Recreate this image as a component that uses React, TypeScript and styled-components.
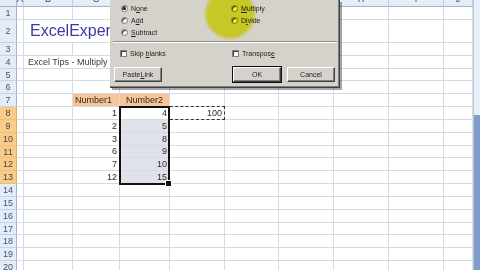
import styled, { createGlobalStyle } from "styled-components";

const GlobalStyle = createGlobalStyle`
  html, body {
    margin: 0;
    padding: 0;
    background: #ffffff;
  }
  body {
    overflow: hidden;
    font-family: "Liberation Sans", Arial, sans-serif;
  }
`;

const COLS = ["A", "B", "C", "D", "E", "F", "G", "H", "I", "J"];
const WIDTHS = [7, 49, 47, 50, 55, 54, 55, 55, 55, 29];
const ROW_COUNT = 21;
const ORANGE_ROWS = [8, 9, 10, 11, 12, 13];

type Kind = "title" | "note" | "head" | "num";
type CellValue = { text: string; kind: Kind; align?: "left" | "right" | "center"; span?: number };

const values: Record<string, CellValue> = {
  B2: { text: "ExcelExpert", kind: "title", span: 3 },
  B4: { text: "Excel Tips - Multiply by a Constant", kind: "note", span: 3 },
  C7: { text: "Number1", kind: "head", align: "left" },
  D7: { text: "Number2", kind: "head", align: "center" },
  E8: { text: "100", kind: "num", align: "right" },
};
const number1 = [1, 2, 3, 6, 7, 12];
const number2 = [4, 5, 8, 9, 10, 15];
number1.forEach((n, i) => {
  values[`C${8 + i}`] = { text: String(n), kind: "num", align: "right" };
});
number2.forEach((n, i) => {
  values[`D${8 + i}`] = { text: String(n), kind: "num", align: "right" };
});

const Screen = styled.div`
  width: 480px;
  height: 270px;
  overflow: hidden;
  position: relative;
  display: flex;
  background: #ffffff;
`;

const Sheet = styled.div`
  width: 473px;
  display: grid;
  grid-template-columns: 17px ${WIDTHS.map((w) => `${w}px`).join(" ")};
  grid-template-rows: 16px 13px 23px repeat(${ROW_COUNT - 2}, 12.83px);
  margin-top: -9px;
  align-self: flex-start;
`;

const Corner = styled.div`
  grid-row: 1;
  grid-column: 1;
  background: #e4ecf7;
  border-right: 1px solid #9eb6ce;
  border-bottom: 1px solid #9eb6ce;
  box-sizing: border-box;
`;

const ColHead = styled.div<{ $col: number }>`
  grid-row: 1;
  grid-column: ${(p) => p.$col};
  box-sizing: border-box;
  background: linear-gradient(#f5f8fc, #e2eaf6);
  border-right: 1px solid #c0cee0;
  border-bottom: 1px solid #9eb6ce;
  color: #27415f;
  font-size: 9px;
  display: flex;
  align-items: center;
  justify-content: center;
`;

const RowHead = styled.div<{ $row: number; $hot: boolean }>`
  grid-row: ${(p) => p.$row};
  grid-column: 1;
  box-sizing: border-box;
  background: ${(p) => (p.$hot ? "#f8cd8c" : "#e4ecf7")};
  border-right: 1px solid ${(p) => (p.$hot ? "#eaa95a" : "#9eb6ce")};
  border-bottom: 1px solid ${(p) => (p.$hot ? "#f0bf7a" : "#c5d3e6")};
  color: ${(p) => (p.$hot ? "#4a4636" : "#3f5476")};
  font-size: 9px;
  display: flex;
  align-items: center;
  justify-content: center;
`;

const Cell = styled.div<{
  $row: number;
  $col: number;
  $span: number;
  $fill?: string;
  $align: "left" | "right" | "center";
  $kind?: Kind;
}>`
  grid-row: ${(p) => p.$row};
  grid-column: ${(p) => `${p.$col} / span ${p.$span}`};
  box-sizing: border-box;
  border-right: 1px solid #d6dbe3;
  border-bottom: 1px solid #d6dbe3;
  background: ${(p) => p.$fill ?? "transparent"};
  display: flex;
  align-items: flex-end;
  justify-content: ${(p) =>
    p.$align === "right" ? "flex-end" : p.$align === "center" ? "center" : "flex-start"};
  padding: 0 2px 1px 2px;
  white-space: nowrap;
  overflow: visible;
  font-size: ${(p) => (p.$kind === "title" ? "16px" : "9px")};
  line-height: 1;
  color: ${(p) => (p.$kind === "title" ? "#3b3c9c" : p.$kind === "note" ? "#3b3b3b" : "#2a2a2a")};
  padding-left: ${(p) => (p.$kind === "title" ? "6px" : p.$kind === "note" ? "4px" : "2px")};
  padding-bottom: ${(p) => (p.$kind === "title" ? "3px" : "1px")};
`;

const Selection = styled.div`
  grid-row: 9 / 15;
  grid-column: 5;
  position: relative;
  margin: -1px 0 -1px -1px;
  border: 2px solid #111;
  pointer-events: none;
`;

const FillHandle = styled.span`
  position: absolute;
  right: -4px;
  bottom: -4px;
  width: 5px;
  height: 5px;
  background: #111;
  border: 1px solid #fff;
`;

const Marquee = styled.div`
  grid-row: 9;
  grid-column: 6;
  margin: -1px 0 0 0;
  border: 1px dashed #333;
  border-left: none;
  pointer-events: none;
`;

const ScrollBar = styled.div`
  width: 7px;
  display: flex;
  flex-direction: column;
  border-left: 1px solid #b9c9e0;
  box-sizing: border-box;
`;

const ScrollTrack = styled.div`
  height: 115px;
  background: #e9eff8;
`;

const ScrollThumb = styled.div`
  flex: 1;
  background: #7f9bc9;
`;

/* Paste Special dialog, only its lower part is on screen */
const Dialog = styled.div`
  position: absolute;
  left: 110px;
  top: 0;
  width: 230px;
  height: 88px;
  box-sizing: border-box;
  background: #d5d2cb;
  border-right: 1px solid #404040;
  border-bottom: 1px solid #404040;
  box-shadow: 2px 2px 0 rgba(0, 0, 0, 0.35), inset -1px -1px 0 #808080;
  display: flex;
  flex-direction: column;
  font-size: 7px;
  color: #222;
`;

const Highlight = styled.span`
  position: absolute;
  left: 94px;
  top: -12px;
  width: 52px;
  height: 52px;
  border-radius: 50%;
  background: radial-gradient(circle, rgb(238, 242, 50) 0%, rgb(238, 242, 50) 60%, rgba(238, 242, 50, 0) 74%);
  mix-blend-mode: multiply;
  pointer-events: none;
`;

const Options = styled.div`
  display: grid;
  grid-template-columns: 110px 1fr;
  grid-auto-rows: 12px;
  padding: 2px 0 0 11px;
`;

const OptionItem = styled.label`
  display: flex;
  align-items: center;
  gap: 3px;
  u {
    text-decoration-thickness: 0.5px;
  }
`;

const RadioDot = styled.span<{ $on?: boolean }>`
  width: 7px;
  height: 7px;
  border-radius: 50%;
  box-sizing: border-box;
  background: #ffffff;
  border: 1px solid #7a7a7a;
  box-shadow: inset 1px 1px 0 #404040;
  display: flex;
  align-items: center;
  justify-content: center;
  &::after {
    content: "";
    width: 3px;
    height: 3px;
    border-radius: 50%;
    background: ${(p) => (p.$on ? "#111" : "transparent")};
  }
`;

const Etched = styled.div`
  margin: 3px 2px 0 3px;
  border-top: 1px solid #8f8c86;
  border-bottom: 1px solid #ffffff;
`;

const Checks = styled.div`
  display: grid;
  grid-template-columns: 112px 1fr;
  margin-top: 5px;
  height: 10px;
  padding-left: 10px;
`;

const CheckBox = styled.span`
  width: 7px;
  height: 7px;
  box-sizing: border-box;
  background: #ffffff;
  border: 1px solid #808080;
  box-shadow: inset 1px 1px 0 #404040;
`;

const Buttons = styled.div`
  display: flex;
  margin-top: 9px;
  padding-left: 4px;
  gap: 6px;
`;

const Button = styled.div<{ $default?: boolean; $gapBefore?: number }>`
  width: 48px;
  height: 15px;
  box-sizing: border-box;
  margin-left: ${(p) => p.$gapBefore ?? 0}px;
  display: flex;
  align-items: center;
  justify-content: center;
  background: #d5d2cb;
  border: 1px solid;
  border-color: #ffffff #404040 #404040 #ffffff;
  outline: ${(p) => (p.$default ? "1px solid #111" : "none")};
  box-shadow: inset -1px -1px 0 #808080;
  font-size: 7px;
  color: #222;
`;

function Radio({ label, on }: { label: React.ReactNode; on?: boolean }) {
  return (
    <OptionItem>
      <RadioDot $on={on} />
      <span>{label}</span>
    </OptionItem>
  );
}

function PasteSpecial() {
  return (
    <Dialog>
      <Options>
        <Radio on label={<>N<u>o</u>ne</>} />
        <Radio label={<><u>M</u>ultiply</>} />
        <Radio label={<>A<u>d</u>d</>} />
        <Radio label={<>D<u>i</u>vide</>} />
        <Radio label={<><u>S</u>ubtract</>} />
      </Options>
      <Etched />
      <Checks>
        <OptionItem>
          <CheckBox />
          <span>Skip <u>b</u>lanks</span>
        </OptionItem>
        <OptionItem>
          <CheckBox />
          <span>Transpos<u>e</u></span>
        </OptionItem>
      </Checks>
      <Buttons>
        <Button>Paste <u>L</u>ink</Button>
        <Button $default $gapBefore={65}>OK</Button>
        <Button>Cancel</Button>
      </Buttons>
      <Highlight />
    </Dialog>
  );
}

export default function App() {
  const rows = Array.from({ length: ROW_COUNT }, (_, i) => i + 1);
  return (
    <>
      <GlobalStyle />
      <Screen>
        <Sheet>
          <Corner />
          {COLS.map((c, i) => (
            <ColHead key={c} $col={i + 2}>
              {c}
            </ColHead>
          ))}
          {rows.map((r) => {
            const gridRow = r + 1;
            const hot = ORANGE_ROWS.includes(r);
            const cells: React.ReactNode[] = [];
            let skip = 0;
            COLS.forEach((c, i) => {
              if (skip > 0) {
                skip--;
                return;
              }
              const ref = `${c}${r}`;
              const v = values[ref];
              const span = v?.span ?? 1;
              skip = span - 1;
              let fill: string | undefined;
              if (r === 7 && (c === "C" || c === "D")) fill = "#f9c596";
              if (c === "D" && r >= 9 && r <= 13) fill = "#dfe2e9";
              cells.push(
                <Cell
                  key={ref}
                  $row={gridRow}
                  $col={i + 2}
                  $span={span}
                  $fill={fill}
                  $align={v?.align ?? "left"}
                  $kind={v?.kind}
                >
                  {v?.text}
                </Cell>
              );
            });
            return [
              <RowHead key={`h${r}`} $row={gridRow} $hot={hot}>
                {r}
              </RowHead>,
              ...cells,
            ];
          })}
          <Selection>
            <FillHandle />
          </Selection>
          <Marquee />
        </Sheet>
        <ScrollBar>
          <ScrollTrack />
          <ScrollThumb />
        </ScrollBar>
        <PasteSpecial />
      </Screen>
    </>
  );
}
